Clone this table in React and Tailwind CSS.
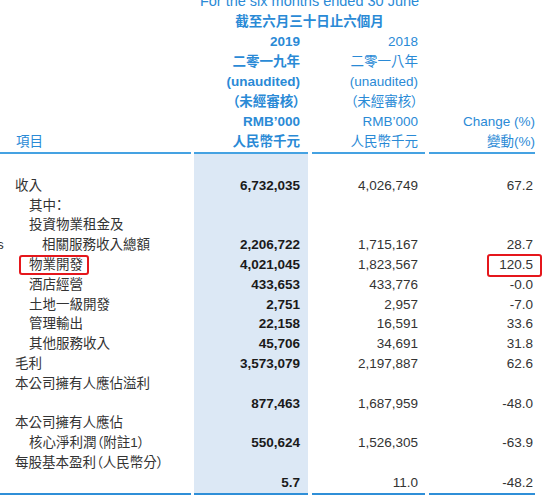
import React from "react";

const rows = [
  { label: "收入", ind: 0, a: "6,732,035", b: "4,026,749", c: "67.2" },
  { label: "其中：", ind: 1 },
  { label: "投資物業租金及", ind: 1 },
  { label: "相關服務收入總額", ind: 2, a: "2,206,722", b: "1,715,167", c: "28.7", s: true },
  { label: "物業開發", ind: 1, a: "4,021,045", b: "1,823,567", c: "120.5", boxed: true },
  { label: "酒店經營", ind: 1, a: "433,653", b: "433,776", c: "-0.0" },
  { label: "土地一級開發", ind: 1, a: "2,751", b: "2,957", c: "-7.0" },
  { label: "管理輸出", ind: 1, a: "22,158", b: "16,591", c: "33.6" },
  { label: "其他服務收入", ind: 1, a: "45,706", b: "34,691", c: "31.8" },
  { label: "毛利", ind: 0, a: "3,573,079", b: "2,197,887", c: "62.6" },
  { label: "本公司擁有人應佔溢利", ind: 0 },
  { label: "", ind: 0, a: "877,463", b: "1,687,959", c: "-48.0" },
  { label: "本公司擁有人應佔", ind: 0 },
  { label: "核心淨利潤（附註1）", ind: 1, a: "550,624", b: "1,526,305", c: "-63.9" },
  { label: "每股基本盈利（人民幣分）", ind: 0 },
  { label: "", ind: 0, a: "5.7", b: "11.0", c: "-48.2" },
];

const header = [
  ["", "2019", "2018", ""],
  ["", "二零一九年", "二零一八年", ""],
  ["", "(unaudited)", "(unaudited)", ""],
  ["", "（未經審核）", "（未經審核）", ""],
  ["", "RMB’000", "RMB’000", "Change (%)"],
  ["項目", "人民幣千元", "人民幣千元", "變動(%)"],
];

const indents = ["pl-[15px]", "pl-[29px]", "pl-[42px]"];

export default function App() {
  return (
    <div className="w-[550px] h-[498px] overflow-hidden bg-white font-['Liberation_Sans','Noto_Sans_CJK_TC',sans-serif] text-[13.5px] [font-feature-settings:'palt']">
      <div className="-mt-[8px]">
        <div className="flex h-[20px] items-center text-[#2a8ad6]">
          <div className="w-[194px]" />
          <div className="w-[231px] text-center text-[14.5px]">For the six months ended 30 June</div>
        </div>
        <div className="flex h-[20px] items-center text-[#2a8ad6]">
          <div className="w-[194px]" />
          <div className="w-[231px] text-center font-bold">截至六月三十日止六個月</div>
        </div>
        {header.map((h, i) => (
          <div key={i} className="flex h-[20px] items-center text-[#2a8ad6] whitespace-nowrap">
            <div className="w-[194px] pl-[16px]">{h[0]}</div>
            <div className="w-[114px] text-right pr-[8px] font-bold">{h[1]}</div>
            <div className="w-[4px]" />
            <div className="w-[113px] text-right pr-[7px]">{h[2]}</div>
            <div className="w-[4px]" />
            <div className="w-[106px] text-right">{h[3]}</div>
          </div>
        ))}
      </div>
      <div className="flex h-[2px]">
        <div className="w-[191px] bg-[#45a2e2]" />
        <div className="w-[3px]" />
        <div className="w-[114px] bg-[#45a2e2]" />
        <div className="w-[4px]" />
        <div className="w-[113px] bg-[#45a2e2]" />
        <div className="w-[4px]" />
        <div className="w-[106px] bg-[#45a2e2]" />
      </div>
      <div className="flex h-[22px]">
        <div className="w-[194px]" />
        <div className="w-[114px] bg-[#dce8f5]" />
      </div>
      {rows.map((r, i) => (
        <div key={i} className="flex h-[19.8px] items-center whitespace-nowrap text-[#333]">
          <div className={`w-[194px] h-full flex items-center ${r.s ? "pl-0" : indents[r.ind]}`}>
            {r.s && <span className="-ml-[3px] w-[45px]">s</span>}
            {r.boxed ? (
              <span className="-ml-[10px] pl-[8px] pr-[4px] h-[20px] flex items-center border-2 border-[#e5171c] rounded-[3px]">
                {r.label}
              </span>
            ) : (
              <span>{r.label}</span>
            )}
          </div>
          <div className="w-[114px] h-full bg-[#dce8f5] flex items-center justify-end pr-[8px] font-bold text-[#1a1a1a]">
            {r.a}
          </div>
          <div className="w-[4px]" />
          <div className="w-[113px] text-right pr-[7px]">{r.b}</div>
          <div className="w-[4px]" />
          <div className="w-[106px] h-full flex items-center justify-end pr-[2px]">
            {r.boxed ? (
              <span className="-mr-[9px] pl-[10px] pr-[7px] h-[23px] flex items-center border-2 border-[#e5171c] rounded-[3px]">
                {r.c}
              </span>
            ) : (
              <span>{r.c}</span>
            )}
          </div>
        </div>
      ))}
      <div className="flex h-[2px] mt-[0.2px]">
        <div className="w-[191px] bg-[#2f8fd8]" />
        <div className="w-[3px]" />
        <div className="w-[114px] bg-[#2f8fd8]" />
        <div className="w-[4px]" />
        <div className="w-[113px] bg-[#2f8fd8]" />
        <div className="w-[4px]" />
        <div className="w-[106px] bg-[#2f8fd8]" />
      </div>
    </div>
  );
}
